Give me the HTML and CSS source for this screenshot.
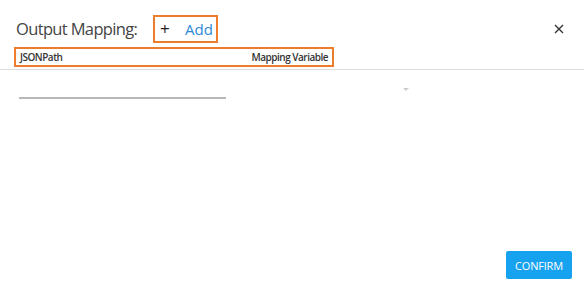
FILE: index.html
```html
<!DOCTYPE html>
<html>
<head>
<meta charset="utf-8">
<link rel="stylesheet" href="styles.css">
</head>
<body>
<div class="dialog">
  <div class="top">
    <h1 class="title">Output Mapping:</h1>
    <div class="add-box"><span class="plus">+</span><span class="add">Add</span></div>
    <div class="spacer"></div>
    <svg class="close" width="10" height="10" viewBox="0 0 10 10"><path d="M1 1L9 9M9 1L1 9" stroke="#333" stroke-width="1.4" fill="none"/></svg>
  </div>
  <div class="table-head"><span class="col">JSONPath</span><span class="col">Mapping Variable</span></div>
  <div class="divider"></div>
  <div class="row">
    <div class="field"></div>
    <div class="arrow"></div>
  </div>
  <div class="footer"><button class="confirm">CONFIRM</button></div>
</div>
</body>
</html>
```
FILE: styles.css
```css
html, body { margin: 0; padding: 0; background: #fff; }
body { font-family: "Open Sans", "Noto Sans", sans-serif; color: #333; width: 584px; height: 300px; overflow: hidden; }
.dialog { display: flex; flex-direction: column; height: 300px; }
.top { display: flex; align-items: center; margin-top: 15px; height: 28px; padding-left: 16px; padding-right: 20px; }
.title { margin: 0; font-weight: 400; font-size: 16.5px; color: #444; line-height: 28px; letter-spacing: -0.65px; width: 137px; white-space: nowrap; }
.add-box { box-sizing: border-box; width: 65px; height: 28px; border: 2px solid #ec7d2d; display: flex; align-items: center; padding-left: 5px; font-size: 15px; }
.plus { color: #222; width: 25px; font-size: 17px; line-height: 20px; }
.add { color: #2d8ad6; }
.spacer { flex: 1; }
.close { display: block; }
.table-head { margin: 4px 0 0 14px; box-sizing: border-box; width: 320px; height: 20px; border: 2px solid #ec7d2d; display: flex; justify-content: space-between; align-items: center; padding: 0 4px; }
.col { font-size: 10px; font-weight: 600; color: #333; letter-spacing: -0.5px; }
.divider { margin-top: 2px; border-top: 1px solid #ddd; }
.row { display: flex; align-items: flex-start; margin-top: 18px; padding-left: 19px; }
.field { width: 207px; height: 9px; border-bottom: 2px solid #b8b8b8; }
.arrow { margin-left: 177px; width: 0; height: 0; border-left: 3px solid transparent; border-right: 3px solid transparent; border-top: 3px solid #ccc; }
.footer { margin-top: auto; display: flex; justify-content: flex-end; padding: 0 12px 21px 0; }
.confirm { width: 66px; height: 28px; background: #17a2ef; color: #fff; border: none; border-radius: 2px; font-family: "Open Sans", sans-serif; font-size: 11px; letter-spacing: -0.2px; padding: 0; }
```
